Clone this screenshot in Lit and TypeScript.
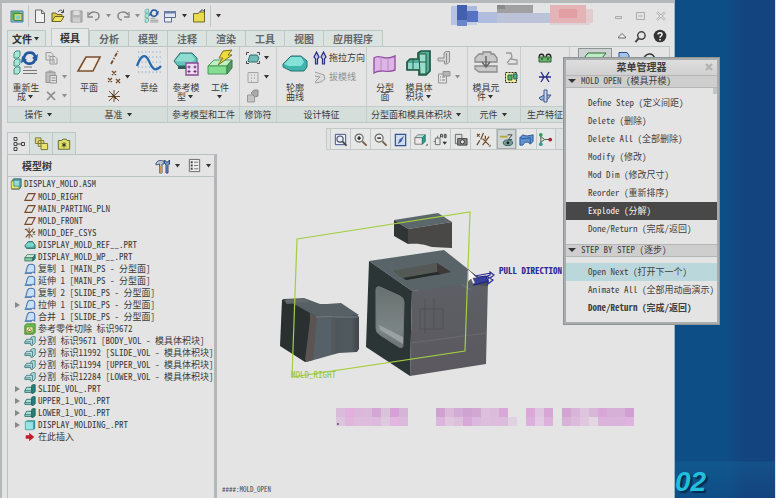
import { LitElement, html, svg, css, nothing } from "lit";
import { customElement, property } from "lit/decorators.js";
import { classMap } from "lit/directives/class-map.js";

type Drawing = { box: string; art: unknown };

const d = (box: string, art: unknown): Drawing => ({ box, art });

const block = (front: string, top: string, side: string) => svg`
  <path d="M1 8 4 4h10l-3 4z" fill=${top} stroke="#2b5a55" stroke-width=".8"/>
  <path d="M1 8h10v4H1z" fill=${front} stroke="#2b5a55" stroke-width=".8"/>
  <path d="m11 8 3-4v5l-3 3z" fill=${side} stroke="#2b5a55" stroke-width=".8"/>`;

const DRAWINGS: Record<string, Drawing> = {
  app: d("0 0 16 16", svg`<path d="M2 3h12v11H2z" fill="#8fb9d8" stroke="#4a7aa5"/><path d="M3 3.500h8V12H3z" fill="#5fae5a"/><path d="M5 5.500h8v7H5z" fill="#d8d36a" stroke="#3f8a4a"/><path d="M7 7.500h4v3.500H7z" fill="#7fd0c8"/>`),
  file: d("0 0 16 16", svg`<path d="M3.500 2h6l3 3v9.500h-9zM9.500 2v3.500h3" fill="#f1f1f1" stroke="#666"/>`),
  open: d("0 0 16 16", svg`<path d="M2 13.500V5h4l1 1.500h5V9" fill="#d9c84a" stroke="#6b6426"/><path d="m2 13.500 3-5h9l-3 5z" fill="#f0e25c" stroke="#6b6426"/><path d="M8 4c2-3 4-2 5 0M13.500 1.500V4.500H11" fill="none" stroke="#444"/>`),
  save: d("0 0 16 16", svg`<path d="M3 3h11v11H3z" fill="#b5b5b5" stroke="#999"/><path d="M5.500 3h6v4h-6z" fill="#dedede"/><path d="M5 9.500h7V14H5z" fill="#cdcdcd"/>`),
  undo: d("0 0 16 16", svg`<path d="M3 7c2-4 10-4 10 1 0 2-1.500 4-4 4" fill="none" stroke="#858585" stroke-width="1.500"/><path d="M2 4v5h5" fill="none" stroke="#858585" stroke-width="1.300"/>`),
  redo: d("0 0 16 16", svg`<path d="M13 7c-2-4-10-4-10 1 0 2 1.500 4 4 4" fill="none" stroke="#858585" stroke-width="1.500"/><path d="M14 4v5H9" fill="none" stroke="#858585" stroke-width="1.300"/>`),
  regen: d("0 0 28 28", svg`${[2, 10, 18].map((y) => svg`<path d="M2 ${y + 2}l2-2h4v5l-2 2H2z" fill="#a8e6da" stroke="#3f8f83"/>`)}<path d="M12 9c1-7 10-7 11-1M23 10c-1 6-9 6-11 1" fill="none" stroke="#2457a0" stroke-width="2.600"/><path d="m26 5-1 7-5-3zM9 14l1-7 5 4z" fill="#2457a0"/><path d="M12 18h8M11 21.500h14M11 24.500h14" stroke="#777" stroke-width="1.200"/>`),
  windows: d("0 0 16 16", svg`<path d="M2.500 3.500h11v6h-11z" fill="#dfe6f2" stroke="#5c6b8f"/><path d="M2 3h12v2.500H2z" fill="#6b7ca6"/><path d="M2.500 9.500h7V14h-7z" fill="#eee" stroke="#5c6b8f"/>`),
  folder: d("0 0 16 16", svg`<path d="M2.500 5.500h5l1-1.500h5v10h-11z" fill="#e8dc4e" stroke="#6f6a25"/><path d="M9 4c1-3 3-2 4-1M13.500 1v3" fill="none" stroke="#444"/>`),
  copy: d("0 0 16 16", svg`<path d="M3 2.500h5l2 2V10H3zM7 6.500h5l2 2V14H7z" fill="#e2e2e2" stroke="#999"/><path d="M9 10h3M9 12h3M5 6h2" stroke="#999"/>`),
  paste: d("0 0 16 16", svg`<path d="M3 3h9v10.500H3z" fill="#bdbdbd" stroke="#949494"/><path d="M5.500 1.500h4v2.500h-4z" fill="#a5a5a5"/><path d="M7 6.500h6.500V14H7z" fill="#e2e2e2" stroke="#949494"/><path d="M8.500 9h4M8.500 11.500h4" stroke="#949494"/>`),
  cross: d("0 0 16 16", svg`<path d="M4 4c3 2 5 5 8 8M12 4c-3 2-5 5-8 8" stroke="#8c8c8c" stroke-width="1.600" fill="none"/>`),
  plane: d("0 0 28 28", svg`<path d="M11 8h14l-7 14H3z" fill="#efebe4" stroke="#7b4f2c" stroke-width="1.600"/>`),
  axis: d("0 0 16 16", svg`<path d="m5 14 7-13" stroke="#744a28" stroke-width="1.700" stroke-dasharray="4 1.500 1.500 1.500"/>`),
  points: d("0 0 16 16", svg`<path d="m6 2 4 4m0-4L6 6M2 9l4 4m0-4-4 4M10 10l4 4m0-4-4 4" stroke="#744a28" stroke-width="1.300"/>`),
  csys: d("0 0 16 16", svg`<path d="M8 2v12M3 3l10 10M13 3 3 13M2 8.500h12" stroke="#744a28"/><path d="m6 6 4 5" stroke="#2f2a22" stroke-width="1.200"/>`),
  sketch: d("0 0 28 28", svg`${[3, 8, 13, 18, 23].map((y) => svg`<path d="M3 ${y}h23" stroke="#7aa6d3" stroke-width="1.200" stroke-dasharray="1.200 2.400"/>`)}<path d="M2 17c4-11 8-13 12-5 3 7 6 12 12 5" fill="none" stroke="#2767ae" stroke-width="2.200"/>`),
  refModel: d("0 0 28 28", svg`<path d="m2 12 6-8h12l5 5v5l-3 3H6z" fill="#66c3bb" stroke="#2c6f6b"/><path d="m3 12 6-7h10l4 5-3 3z" fill="#8fdcd3"/><path d="M6 17h8v3H6z" fill="#2c5e5c"/><path d="M14 14h12v12H14z" fill="#f0dcf2" stroke="#8b4a93" stroke-width="1.400"/><path d="M17 16.500v3m-1.500-1.500h3M23 16.500v3m-1.500-1.500h3M17 21v3m-1.500-1.500h3M23 21v3m-1.500-1.500h3" stroke="#6a2f78"/>`),
  workpiece: d("0 0 28 28", svg`<path d="m2 17 6-6h18l-5 6z" fill="#bff0c4" stroke="#4d9a5c"/><path d="M2 17h19v8H2z" fill="#85dc93" stroke="#4d9a5c"/><path d="m21 17 5-6v8l-5 6z" fill="#4f9f60" stroke="#397a48"/><path d="m17 2 9-1-4 5h4L12 16l5-7h-4z" fill="#eddc3c" stroke="#7e6f1d"/>`),
  shrink: d("0 0 16 16", svg`<path d="m3 11 2-6h7l2 3-2 4H4z" fill="#70bdb8" stroke="#2c6f6b"/><path d="M1.500 5V2.500H4M12 2.500h2.500V5M1.500 11v2.500H4M12 13.500h2.500V11" fill="none" stroke="#444"/>`),
  grayBox: d("0 0 16 16", svg`<path d="M3 3.500h10v10H3z" fill="#e2e2e2" stroke="#a5a5a5"/><path d="M6 6h1M9 6h1M6 9h1M9 9h1M6 12h1" stroke="#999"/>`),
  grayTool: d("0 0 16 16", svg`<path d="M2.500 7h7v7h-7z" fill="#c4c4c4" stroke="#999"/><path d="m6 5 3-3h4v6l-3 1z" fill="#aaa" stroke="#8b8b8b"/>`),
  silhouette: d("0 0 28 28", svg`<path d="m2 15 8-8h10l6 5v6l-3 4H10l-8-4z" fill="#3fb5ae" stroke="#2b6e6c"/><path d="m3 15 7-7h10l3 5-3 4H8z" fill="#84e2d9"/>`),
  pull: d("0 0 16 16", svg`<path d="m2 7 2.500-5L7 7 5.500 9v5h-2V9zM9 7l2.500-5L14 7l-1.500 2v5h-2V9z" fill="#bcc3e4" stroke="#2b2f86" stroke-width="1.200"/>`),
  draft: d("0 0 16 16", svg`<path d="m3 3 9 3 1 4-4 3-6 1M3 7l5 1-5 5" fill="#dcdcdc" stroke="#a0a0a0"/>`),
  parting: d("0 0 28 28", svg`<path d="M3 9c6-5 9 4 21-2v14c-8 4-14-2-21 3z" fill="#deb6e6" stroke="#9553a3" stroke-width="1.400"/><path d="M10 8v13M17 9v13" stroke="#bd86c8"/>`),
  volume: d("0 0 28 28", svg`<path d="m2 13 3-3h8V4l3-2h9v20l-4 4h-7v-5H2z" fill="#55aa99" stroke="#1e5a42" stroke-width="1.700"/><path d="M3 14h11v6H3z" fill="#8fd8cc"/><path d="M14 5h7v20h-6z" fill="#9bdccb" stroke="#1e5a42"/><path d="M8 10v10M14 13h7" stroke="#1e5a42"/>`),
  grayVolume: d("0 0 16 16", svg`<path d="M2 8h6V3l2-1.500h3.500V12L11 14H8.500v-3H2z" fill="#d5d5d5" stroke="#8d8d8d"/><path d="M10.500 3v10" stroke="#8d8d8d"/>`),
  grayForm: d("0 0 16 16", svg`<path d="M2.500 5h8v9h-8z" fill="#e4e4e4" stroke="#929292"/><path d="M7 2.500h7V7H7z" fill="#b5b5b5" stroke="#929292"/><path d="M4 8h1m1 0h3M4 11h1m1 0h3" stroke="#808080"/>`),
  component: d("0 0 28 28", svg`<path d="m3 9 4-4h4V3h8v2h3l3 4v4H3zM3 17h22v6H7l-4-3z" fill="#c9c9c9" stroke="#8b8b8b" stroke-width="1.300"/><path d="M14 7v10m-4-4 4 5 4-5" fill="none" stroke="#666" stroke-width="1.500"/>`),
  grayPart: d("0 0 16 16", svg`<path d="M3 3h5l1 4-5 6M8 9l6 1v4H5" fill="none" stroke="#999" stroke-width="1.300"/>`),
  pattern: d("0 0 16 16", svg`<path d="M2.500 3.500h11v10h-11z" fill="#f2ee9a" stroke="#222" stroke-dasharray="2 1"/><path d="M5 6h4v5H5z" fill="#57b46c" stroke="#22604a"/><path d="M10 5h4v5h-3z" fill="#4aaea5" stroke="#22604a"/>`),
  runner: d("0 0 16 16", svg`<path d="M2 8c0-5 5-5 5 0M9 8c0-5 5-5 5 0" fill="none" stroke="#222" stroke-width="1.300"/><path d="M2 7h12v5H2z" fill="#67b46a" stroke="#2d6430"/><path d="M4 9h2m4 0h2" stroke="#222"/>`),
  water: d("0 0 16 16", svg`<path d="M2 8h12M4 3l3 5-3 5M12 3 9 8l3 5" fill="none" stroke="#262a86" stroke-width="1.300"/>`),
  ejector: d("0 0 16 16", svg`<path d="m2 10 5-3h7l-4 5H4z" fill="#9fb6da" stroke="#3d5a8c"/><path d="M7 2h3v12H7z" fill="#c9d6ec" stroke="#3d5a8c"/>`),
  greenBlock: d("0 0 28 28", svg`<path d="m3 9 4-5h18l-4 5z" fill="#bcecc1" stroke="#2d6b3a"/><path d="M3 9h18v12H3z" fill="#7fd28c" stroke="#2d6b3a"/>`),
  blueDoc: d("0 0 16 16", svg`<path d="M3 2.500h8l2 3V14H3z" fill="#a4c4ea" stroke="#27508f"/>`),
  gauge: d("0 0 28 28", svg`<path d="M4 12c2-9 10-9 12-2h9" fill="none" stroke="#333" stroke-width="1.600"/><circle cx="10" cy="12" r="3" fill="#888"/>`),
  tabTree: d("0 0 16 16", svg`<path d="M3 1.500h3v3H3zM3 6.500h3v3H3zM3 11.500h3v3H3zM10.500 6.500h3v3h-3zM6 8h4.500" fill="none" stroke="#444"/>`),
  tabFolders: d("0 0 16 16", svg`<path d="M1.500 2h6v6h-6zM4.500 5h6v6h-6z" fill="#e3dc7a" stroke="#77722d"/><path d="M7.500 8h7v6.500h-7z" fill="#ece36d" stroke="#77722d"/>`),
  tabFav: d("0 0 16 16", svg`<path d="M1.500 4h4l1-1.500h4l1 1.500h3v10h-13z" fill="#dfe068" stroke="#5b5c26"/><path d="M8 6v6M5.500 7.500l5 3M10.500 7.500l-5 3" stroke="#222"/>`),
  tools: d("0 0 16 16", svg`<path d="M1 5c3-4 5-2 8-2v3H7v9H4.500V6L1 7z" fill="#b9c4d4" stroke="#4c5f7d"/><path d="M4.500 8H7v7H4.500z" fill="#d0964a"/><path d="M11 15V7L9.500 5V2l2 2h1l2-2v4L13 7.500V15z" fill="#6f92c2" stroke="#2f4b79"/>`),
  listDoc: d("0 0 16 16", svg`<path d="M2.500 1.500h11v13h-11z" fill="#ededed" stroke="#666"/><path d="M4 4.500h2M4 8h2M4 11.500h2" stroke="#444" stroke-width="2"/><path d="M7.500 4.500H12M7.500 8H12M7.500 11.500H12" stroke="#777"/>`),
  asm: d("0 0 14 14", svg`<path d="m2 4 2-3h9v9l-2 3H2z" fill="#4c9aa0" stroke="#3d6b6f"/><path d="M1.500 3.500h9v9h-9z" fill="#ece56e" stroke="#8f8a35"/><path d="M4.500 2.500h7v7h-7z" fill="#94dcd8" stroke="#3d8f8a"/>`),
  datum: d("0 0 14 14", svg`<path d="M5 3h8l-4 8H1z" fill="none" stroke="#744a28" stroke-width="1.300"/>`),
  treeCsys: d("0 0 14 14", svg`<path d="M6 1v12M2 2l8 10M11 2 2 12M10 5l3 4m0-4-3 4M1 3h3" stroke="#744a28" stroke-width="1.200"/>`),
  refPart: d("0 0 14 14", svg`<path d="m1 8 4-5h5l3 4v4H3z" fill="#4aa8a0" stroke="#256863"/><path d="m2 7 3-3h5l2 3-2 2H3z" fill="#7dd6ce"/>`),
  wpPart: d("0 0 15 14", block("#7fcf9f", "#c5f0d2", "#2f7d63")),
  quilt: d("0 0 14 14", svg`<path d="M1.500 12c2-2 1-8 4-10 3-1 7 0 7 2v8c-1-2-3-2-4 0z" fill="#c8e0f4" stroke="#4472ad" stroke-width="1.200"/><path d="M2 11.500h7" stroke="#4472ad"/>`),
  cut: d("0 0 14 14", svg`<path d="M1 3l2-2h10v10l-2 2H1z" fill="#6ec14c" stroke="#3b7d2a"/><path d="M2.500 4.500h8v7h-8z" fill="#f0f2b8" stroke="#4e8b2f"/><path d="M4.500 10V8l2-2 2 2v2z" fill="none" stroke="#8b5a2b"/>`),
  split: d("0 0 14 14", svg`<path d="m1 8 2-3h5V3l2-1h3v7l-3 3H8v-2H1z" fill="#b5dfe0" stroke="#3f787c"/><path d="M8 5h2v6M1 8h7" fill="none" stroke="#3f787c"/>`),
  volPart: d("0 0 14 14", svg`<path d="m1 9 2-4h6v6H1z" fill="#a6e0d5" stroke="#2d6b66"/><path d="M1 9h7" stroke="#2d6b66"/><path d="m9 3 1-1h3v8l-2 2H9z" fill="#2b8078" stroke="#1c5852"/>`),
  molding: d("0 0 14 14", svg`<path d="m2 3 1.500-1.500H13V11l-1.500 1.500z" fill="#35918d"/><path d="M1.500 3h9.500v9.500H1.500z" fill="#97e3e3" stroke="#4aa5a5"/>`),
  insert: d("0 0 14 14", svg`<path d="M2 5h4V2l6 5-6 5V9H2z" fill="#bf1f2c"/>`),
  zoomFit: d("0 0 16 16", svg`<path d="M2.500 2.500h11v11h-11z" fill="#e8eef8" stroke="#3f4f8c"/><circle cx="7.500" cy="7.500" r="3.300" fill="none" stroke="#4a4f63" stroke-width="1.200"/><path d="m10 10 4.500 4.500" stroke="#444" stroke-width="1.800"/>`),
  zoomIn: d("0 0 16 16", svg`<circle cx="6.500" cy="6.500" r="4.300" fill="#eee" stroke="#666" stroke-width="1.200"/><path d="M4.500 6.500h4m-2-2v4" stroke="#222" stroke-width="1.500"/><path d="m10 10 4.500 4.500" stroke="#7a5c3c" stroke-width="2"/>`),
  zoomOut: d("0 0 16 16", svg`<circle cx="6.500" cy="6.500" r="4.300" fill="#eee" stroke="#666" stroke-width="1.200"/><path d="M4.500 6.500h4" stroke="#222" stroke-width="1.500"/><path d="m10 10 4.500 4.500" stroke="#7a5c3c" stroke-width="2"/>`),
  repaint: d("0 0 16 16", svg`<path d="M2.500 2.500h11v12h-11z" fill="#cfdcf3" stroke="#34528f" stroke-width="1.300"/><path d="m5 13 2-5 5-4-3 6z" fill="#3c5fa6"/>`),
  shade: d("0 0 16 16", svg`<path d="m2 6 3-3h8l-3 3z" fill="#bdeee5" stroke="#777"/><path d="M2 6h8v7H2z" fill="#e9e9e9" stroke="#777"/><path d="m10 6 3-3v7l-3 3z" fill="#319c90" stroke="#24776d"/><path d="M13.500 14.500h2v-2z" fill="#222"/>`),
  views: d("0 0 16 16", svg`<path d="M2.500 6.500h5v7h-5zM5 6.500V4M2 10H.500" fill="none" stroke="#666"/><path d="M8 6V2.500h2V6M8 4.500h2M12 2.500h2V6h-2zM12 4.200h2" fill="none" stroke="#444"/><path d="M10 10.500h5l-2.500 3z" fill="#333"/>`),
  camera: d("0 0 16 16", svg`<path d="M2.500 2.500h7v10h-7z" fill="#ddd" stroke="#666"/><path d="M5 7h10v7H5z" fill="#888" stroke="#444"/><circle cx="10" cy="10.500" r="2.200" fill="#e4e4e4" stroke="#333"/>`),
  datums: d("0 0 16 16", svg`<path d="m1 2 3 3m0-3L1 5M8 1 5 8M4 9l-3 5M7 7l7 7M14 5l-7 9M10 4v4" stroke="#744a28" stroke-width="1.300"/><path d="M13.500 15.500h2v-2z" fill="#222"/>`),
  annot: d("0 0 16 16", svg`<path d="M1 5h8" stroke="#b6aa36" stroke-width="2"/><path d="M9 3h5l-4 5h4" fill="none" stroke="#444"/><ellipse cx="9.500" cy="11.500" rx="5" ry="3" fill="#6f9c98" stroke="#375f5c"/><circle cx="9.500" cy="11.500" r="1.500" fill="#222"/>`),
  surface: d("0 0 16 16", svg`<path d="m1 6 3-3c3 2 7 1 11 0v7l-3 3c-2-3-6-3-8 1H1z" fill="#5d93d3" stroke="#2b5590"/><path d="M1 6c4 2 7 1 11 0v6" fill="none" stroke="#2b5590"/>`),
  nodes: d("0 0 16 16", svg`<path d="M3 3v10M3 5l4 3h5M3 11l4-3" fill="none" stroke="#3d5c4a"/><circle cx="3" cy="3" r="2" fill="#3a9a5a"/><circle cx="3" cy="13" r="2" fill="#3a9a96"/><circle cx="13" cy="8" r="2" fill="#a82330"/>`),
  minimize: d("0 0 12 12", svg`<path d="M2.500 6.500h6v2h-6z" fill="none" stroke="#aaa"/>`),
  restore: d("0 0 12 12", svg`<path d="M2.500 2.500h8v7h-8zM4.500 6h4" fill="none" stroke="#aaa"/>`),
  close: d("0 0 12 12", svg`<path d="m2 2 8 8m0-8-8 8" stroke="#b2b2b2" stroke-width="2.400"/><path d="m2 2 8 8m0-8-8 8" stroke="#e4e4e4"/>`),
  dialogClose: d("0 0 12 12", svg`<path d="m3 3 6 6m0-6-6 6" stroke="#b0b0b0" stroke-width="2"/>`),
  up: d("0 0 12 12", svg`<path d="m2.500 7 3.500-3.500L9.500 7v1h-7z" fill="#eee" stroke="#666"/>`),
  search: d("0 0 14 14", svg`<circle cx="8" cy="6" r="4" fill="none" stroke="#444" stroke-width="1.600"/><path d="m5 9-3.500 4" stroke="#444" stroke-width="2.200"/>`),
  help: d("0 0 14 14", svg`<circle cx="7" cy="7" r="6.300" fill="#333"/><path d="M5 5.500C5 3 9.200 3.200 9 5.500 8.900 7 7 7 7 8.700M7 10v1.500" fill="none" stroke="#fff" stroke-width="1.500"/>`),
};

const icon = (name: string, size: number) => {
  const { box, art } = DRAWINGS[name];
  return html`<svg class="icon" width=${size} height=${size} viewBox=${box} aria-hidden="true">${art}</svg>`;
};

const caret = (dim = false) => html`<svg class="caret" width="9" height="5" viewBox="0 0 9 5" aria-hidden="true"><path d="M2 1h5L4.500 4.500z" fill=${dim ? "#8e8e8e" : "#333"}/></svg>`;

const shared = css`
  * { box-sizing: border-box; }
  button {
    font: inherit; color: inherit; background: none; border: 0; margin: 0; padding: 0;
    display: flex; align-items: center; white-space: nowrap;
  }
  svg { display: block; flex: none; }
`;

type Big = { kind: "big"; icon: string; lines: string[]; drop?: boolean; active?: boolean; label?: string };
type Small = { icon: string; text?: string; drop?: boolean; dim?: boolean; label: string };
type Col = { kind: "col"; items: Small[] };
type Group = { title: string; drop?: boolean; cls: string; parts: (Big | Col)[] };

const GROUPS: Group[] = [
  { title: "操作", drop: true, cls: "snug", parts: [
    { kind: "big", icon: "regen", lines: ["重新生", "成"], drop: true },
    { kind: "col", items: [{ icon: "copy", label: "复制" }, { icon: "paste", label: "粘贴", drop: true, dim: true }, { icon: "cross", label: "删除", drop: true, dim: true }] } ] },
  { title: "基准", drop: true, cls: "snug", parts: [
    { kind: "big", icon: "plane", lines: ["平面"] },
    { kind: "col", items: [{ icon: "axis", label: "轴" }, { icon: "points", label: "点", drop: true }, { icon: "csys", label: "坐标系" }] },
    { kind: "big", icon: "sketch", lines: ["草绘"] } ] },
  { title: "参考模型和工件", cls: "snug", parts: [
    { kind: "big", icon: "refModel", lines: ["参考模", "型"], drop: true },
    { kind: "big", icon: "workpiece", lines: ["工件", ""], drop: true } ] },
  { title: "修饰符", cls: "roomy", parts: [
    { kind: "col", items: [{ icon: "shrink", label: "收缩", drop: true }, { icon: "grayBox", label: "分类", drop: true }, { icon: "grayTool", label: "修饰" }] } ] },
  { title: "设计特征", cls: "snug", parts: [
    { kind: "big", icon: "silhouette", lines: ["轮廓", "曲线"] },
    { kind: "col", items: [{ icon: "pull", text: "拖拉方向", label: "拖拉方向" }, { icon: "draft", text: "拔模线", dim: true, label: "拔模线" }] } ] },
  { title: "分型面和模具体积块", drop: true, cls: "snug", parts: [
    { kind: "big", icon: "parting", lines: ["分型", "面"] },
    { kind: "big", icon: "volume", lines: ["模具体", "积块"], drop: true },
    { kind: "col", items: [{ icon: "grayVolume", label: "体积块分割" }, { icon: "grayForm", label: "实体分割", drop: true, dim: true }] } ] },
  { title: "元件", drop: true, cls: "snug", parts: [
    { kind: "big", icon: "component", lines: ["模具元", "件"], drop: true },
    { kind: "col", items: [{ icon: "grayPart", label: "铸模" }, { icon: "pattern", label: "模具布局" }] } ] },
  { title: "生产特征", cls: "center", parts: [
    { kind: "col", items: [{ icon: "runner", label: "流道" }, { icon: "water", label: "等高线" }, { icon: "ejector", label: "顶杆孔" }] } ] },
  { title: "", cls: "last", parts: [
    { kind: "big", icon: "greenBlock", lines: [], active: true, label: "模具开模" },
    { kind: "col", items: [{ icon: "blueDoc", label: "拔模" }] },
    { kind: "big", icon: "gauge", lines: [], label: "厚度" } ] },
];

@customElement("mold-ribbon")
export class MoldRibbon extends LitElement {
  static styles = [shared, css`
    :host { display: block; font-size: 9px; line-height: 9px; color: #3c3c3c; }
    .tabs { display: flex; align-items: flex-end; height: 18px; font-size: 10px; font-weight: 700; color: #626666; }
    .file, .tab { height: 16px; background: #dbe3e1; border: 1px solid #bcc8c6; border-bottom: 0; }
    .file { padding: 0 4px; margin-right: 5px; color: #2e2e2e; }
    .tab { padding: 0 9px; border-width: 1px 0 0 1px; }
    .tab:last-child { border-right-width: 1px; }
    .tab.on { height: 18px; background: #e6e7e7; border-right-width: 1px; padding: 0 8px; color: #333; }
    .groups { display: flex; border: 1px solid #bcc8c6; overflow: hidden; }
    .group { display: flex; flex-direction: column; border-right: 1px solid #c6cccb; flex: none; }
    .group.last { flex: 1 1 0; border-right: 0; }
    .body { display: flex; height: 59px; align-items: flex-start; padding: 1px 1px 0; }
    .roomy .body { padding-left: 5px; padding-right: 5px; }
    .center .body { justify-content: center; }
    .last .body { gap: 4px; padding-left: 8px; }
    .title { display: flex; align-items: center; justify-content: center; height: 16px; gap: 2px; padding: 0 4px; background: #d6dedc; border-top: 1px solid #c3cccb; white-space: nowrap; }
    .center .title { padding: 0 6px; }
    .roomy .title { padding: 0; }
    .big { flex-direction: column; min-width: 34px; height: 55px; padding: 1px 2px 0; }
    .big.active { background: #cfd2d2; box-shadow: inset 0 0 0 1px #8d9292; }
    .big .lines { margin-top: 6px; display: flex; flex-direction: column; align-items: center; }
    .line { display: flex; align-items: center; justify-content: center; min-height: 9px; }
    .col { display: flex; flex-direction: column; }
    .small { height: 19px; gap: 1px; }
    .dim { color: #8f9191; }
  `];

  private big(b: Big) {
    return html`<button class=${classMap({ big: true, active: !!b.active })} aria-label=${b.label ?? b.lines.join("")}>
      ${icon(b.icon, 28)}
      <span class="lines">${b.lines.map((t, i) => html`<span class="line">${t}${b.drop && i === b.lines.length - 1 ? caret() : nothing}</span>`)}</span>
    </button>`;
  }

  private small(s: Small) {
    return html`<button class=${classMap({ small: true, dim: !!s.dim })} aria-label=${s.label}>
      ${icon(s.icon, 16)}${s.text ?? nothing}${s.drop ? caret(s.dim) : nothing}
    </button>`;
  }

  render() {
    return html`
      <nav class="tabs" role="tablist" aria-label="功能区">
        <button class="file">文件${caret()}</button>
        ${["模具", "分析", "模型", "注释", "渲染", "工具", "视图", "应用程序"].map((t, i) => html`
          <button role="tab" aria-selected=${i === 0 ? "true" : "false"} class=${classMap({ tab: true, on: i === 0 })}>${t}</button>`)}
      </nav>
      <div class="groups">
        ${GROUPS.map((g) => html`<section class="group ${g.cls}">
          <div class="body">${g.parts.map((p) => p.kind === "big" ? this.big(p) : html`<div class="col">${p.items.map((s) => this.small(s))}</div>`)}</div>
          <div class="title">${g.title}${g.drop ? caret() : nothing}</div>
        </section>`)}
      </div>`;
  }
}

type TreeNode = { icon: string; text: string; fold?: boolean };
const NODES: TreeNode[] = [
  { icon: "datum", text: "MOLD_RIGHT" },
  { icon: "datum", text: "MAIN_PARTING_PLN" },
  { icon: "datum", text: "MOLD_FRONT" },
  { icon: "treeCsys", text: "MOLD_DEF_CSYS" },
  { icon: "refPart", text: "DISPLAY_MOLD_REF__.PRT" },
  { icon: "wpPart", text: "DISPLAY_MOLD_WP__.PRT" },
  { icon: "quilt", text: "复制 1 [MAIN_PS - 分型面]" },
  { icon: "quilt", text: "延伸 1 [MAIN_PS - 分型面]" },
  { icon: "quilt", text: "复制 2 [SLIDE_PS - 分型面]" },
  { icon: "quilt", text: "拉伸 1 [SLIDE_PS - 分型面]", fold: true },
  { icon: "quilt", text: "合并 1 [SLIDE_PS - 分型面]" },
  { icon: "cut", text: "参考零件切除 标识9672" },
  { icon: "split", text: "分割 标识9671 [BODY_VOL - 模具体积块]" },
  { icon: "split", text: "分割 标识11992 [SLIDE_VOL - 模具体积块]" },
  { icon: "split", text: "分割 标识11994 [UPPER_VOL - 模具体积块]" },
  { icon: "split", text: "分割 标识12284 [LOWER_VOL - 模具体积块]" },
  { icon: "volPart", text: "SLIDE_VOL_.PRT", fold: true },
  { icon: "volPart", text: "UPPER_1_VOL_.PRT", fold: true },
  { icon: "volPart", text: "LOWER_1_VOL_.PRT", fold: true },
  { icon: "molding", text: "DISPLAY_MOLDING_.PRT", fold: true },
  { icon: "insert", text: "在此插入" },
];

@customElement("model-tree")
export class ModelTree extends LitElement {
  static styles = [shared, css`
    :host { display: flex; flex-direction: column; font-size: 9px; color: #3a3a3a; }
    .tabs { display: flex; height: 22px; }
    .tab { width: 23px; justify-content: center; background: #d9e1df; border: 1px solid #bcc8c6; border-width: 1px 1px 0 0; }
    .tab.on { background: #e4e4e4; border-left-width: 1px; }
    .panel { flex: 1; border: 1px solid #b9c2c2; border-right: 3px solid #b3b7b7; border-bottom: 0; min-height: 0; overflow: hidden; }
    .head { display: flex; align-items: center; height: 22px; padding: 0 1px 0 14px; border-bottom: 1px solid #bcc4c4; }
    h2 { margin: 0; flex: 1; font-size: 10px; font-weight: 700; }
    .tool { gap: 2px; margin-left: 5px; }
    ul { list-style: none; margin: 0; padding: 0 0 0 2px; font-feature-settings: "hwid"; }
    ul ul { padding-left: 3px; }
    .row { display: flex; align-items: center; height: 12px; gap: 2px; line-height: 12px; white-space: pre; }
    .root { height: 14px; }
    .fold { width: 9px; }
  `];

  render() {
    return html`
      <div class="tabs" role="tablist" aria-label="导航器">
        <button class="tab on" role="tab" aria-label="模型树">${icon("tabTree", 16)}</button>
        <button class="tab" role="tab" aria-label="文件夹浏览器">${icon("tabFolders", 15)}</button>
        <button class="tab" role="tab" aria-label="收藏夹">${icon("tabFav", 14)}</button>
      </div>
      <div class="panel">
        <div class="head"><h2>模型树</h2>
          <button class="tool" aria-label="设置">${icon("tools", 16)}${caret()}</button>
          <button class="tool" aria-label="显示">${icon("listDoc", 15)}${caret()}</button>
        </div>
        <ul role="tree">
          <li role="treeitem"><div class="row root">${icon("asm", 12)}<span>DISPLAY_MOLD.ASM</span></div>
            <ul role="group">${NODES.map((n) => html`<li class="row" role="treeitem">
              <svg class="fold" width="9" height="8" viewBox="0 0 9 8" aria-hidden="true">${n.fold ? svg`<path d="M2 1v6l5-3z" fill="#858888"/>` : nothing}</svg>${icon(n.icon, 12)}<span>${n.text}</span></li>`)}
            </ul>
          </li>
        </ul>
      </div>`;
  }
}

const VIEW_TOOLS: [string, string][] = [
  ["zoomFit", "重新调整"], ["zoomIn", "放大"], ["zoomOut", "缩小"], ["repaint", "重画"], ["shade", "显示样式"], ["views", "已命名视图"],
  ["camera", "视图管理器"], ["datums", "基准显示"], ["annot", "注释显示"], ["surface", "曲面"], ["nodes", "旋转中心"],
];

type Tile = { x: number; y: number; fill: string };
const tiles = (left: number, rows: string[]): Tile[] =>
  rows.flatMap((row, r) => row.split(" ").map((c, i) => ({ x: left + i * 9, y: 409 + r * 9, fill: c === "-" ? "none" : `#${c}` })));

const MOSAIC = [
  ...tiles(336, [
    "d9bcd9 e3b0dd dbb8da dab9da d3a6d3 d9c3d9 d99fd8 d5b5d6",
    "dcc6dc e0b6dd dfbcdc dfbcde dcbadb dec9de e3b5e0 dbb9dc",
  ]),
  ...tiles(436, [
    "cfa2d1 d9bad9 d2acd4 cfa3d1 d0a8d2 dcc0dc dbbcdb d8a8d8 - - dba8da dfc5df d6a6d7 - d2a3d3 d9b4d9 dec4df d9b7d9 d8a7d8 d6b0d7 d7b0d8 cfa0d1",
    "dbb5dc dfc8df dcc0dc d7a9d8 dbb9dc dcbfdc dcbddc dcbcdc e0d2e0 - dcb0dc e1cbe1 dcb2dc - d8b1d9 dbbadb dfc7df e2d6e2 dbb3db d9b4da dab4db ddb4dd",
  ]),
];

@customElement("mold-canvas")
export class MoldCanvas extends LitElement {
  static styles = [shared, css`
    :host { display: flex; flex-direction: column; min-width: 0; overflow: hidden; }
    .tools { align-self: center; display: flex; height: 22px; padding: 0 9px 0 3px; border: 1px solid #c2c9c8; background: #dfe2e2; flex: none; }
    .tool { width: 20px; justify-content: center; border-left: 1px solid #c2c9c8; background: #e6e7e7; }
    .tool.wide { width: 26px; }
    .tool:last-child { border-right: 1px solid #c2c9c8; }
    .tool.on { background: #d0d5d5; box-shadow: inset 0 0 0 1px #a5aaaa; }
    .scene { font-feature-settings: "hwid"; }
    .pull { font-size: 9px; font-weight: 700; fill: #2a2a94; }
    .name { font-size: 9px; fill: #93c63c; }
    .status { font-size: 7px; fill: #444; }
  `];

  render() {
    return html`
      <div class="tools" role="toolbar" aria-label="图形工具栏">
        ${VIEW_TOOLS.map(([n, label]) => html`<button class=${classMap({ tool: true, on: n === "annot", wide: n === "datums" })} aria-label=${label}>${icon(n, 15)}</button>`)}
      </div>
      <svg class="scene" width="457" height="347" viewBox="217 151 457 347" role="img" aria-label="模具分解视图">
        <defs>
          <linearGradient id="front" x1="0" y1="0" x2="0" y2="1"><stop offset="0" stop-color="#5d6066"/><stop offset="1" stop-color="#5b585f"/></linearGradient>
          <linearGradient id="inner" x1="0" y1="0" x2="0" y2="1"><stop offset="0" stop-color="#68706f"/><stop offset=".7" stop-color="#7c8586"/><stop offset="1" stop-color="#6b7375"/></linearGradient>
          <linearGradient id="round" x1="0" y1="0" x2="1" y2="0"><stop offset="0" stop-color="#566066"/><stop offset=".45" stop-color="#566067"/><stop offset=".5" stop-color="#4f575d"/><stop offset=".85" stop-color="#50595e"/><stop offset="1" stop-color="#3f4448"/></linearGradient>
        </defs>
        <path d="m394 221 44-7 14 9-44 7z" fill="#5c676c"/>
        <path d="m394 221 14 9v15l-14-8z" fill="#2f3434"/>
        <path d="m408 230 44-7v26l-20-1c-6-1-8-4-24-3z" fill="#494847"/>
        <path d="m369 262 75-11 44 35-76 6z" fill="#596469"/>
        <path d="m369 262 43 30-2 85-44-29z" fill="#2c3535"/>
        <path d="m412 292 76-10-2 83-76 12z" fill="url(#front)"/>
        <path d="m393 272 44-8 14 9-45 8z" fill="#4e5150"/>
        <path d="m393 272 44-8v9l-34 6z" fill="#555956"/><path d="m437 264 14 9-14 3z" fill="#3e3938"/>
        <path d="m403 279 34-6 4 2-35 6z" fill="#242b29"/>
        <path d="M376 291q0-4 4-3l20 9q4 2 4 6l-1 43q0 4-4 2l-19-12q-5-3-4-8z" fill="url(#inner)" stroke="#747778"/>
        <path d="m379 326 24 12v7l-23-14z" fill="#9aa1a1"/>
        <path d="m411 344 75-10" stroke="#6b6870"/>
        <path d="M420 310h23v20h-23zM425 300v34M434 299v30" fill="none" stroke="#4d4b55" stroke-width=".7"/>
        <path d="m461 285 10 6" stroke="#777"/>
        <path d="M282 301l2-1 20-1 16 6h7l14-1 18 12-13 4-36-2z" fill="#566065"/>
        <path d="m282 301 3-1 25 14q2 2 2 6l-4 42-3 1-25-16z" fill="#29302f"/>
        <path d="M311 319l3-3 25 1 18-1 2 2v32l-2 3-18 1q-8 2-18 5l-11 3-3-2z" fill="url(#round)"/>
        <path d="M310 314q5 1 7 4l-4 43-6 2-2-2 5-40z" fill="#5b5453"/>
        <path d="M316 318q14-1 22 0h20" fill="none" stroke="#727c81"/>
        <path d="M334 320v35" stroke="#5f5659" stroke-width="1.500"/>
        <path d="m284 301 20-1 6 3-23 2z" fill="#65686a"/>
        <path d="m297 240 173-27-5 139-173 26z" fill="none" stroke="#a3cf3f" stroke-width="1.200"/>
        <path d="m467 270 14 10 7 3v4l-14-1z" fill="#454c58"/>
        <path d="m475 277 16-3m-18 12 16-4m-15 0 16-6v-3l4 3-4 3M488 281v-3l5 3-5 4z" fill="none" stroke="#2a2a94" stroke-width="1.200"/>
        <path d="m472 279 14-2 2 5-14 4z" fill="#39409c" stroke="#1f2380"/>
        <path d="M468 270v13l3-3 2 5 2-1-2-5h4z" fill="#f6f6f6" stroke="#555" stroke-width=".5"/>
        <text class="pull" x="499" y="275">PULL DIRECTION</text>
        <text class="name" x="291" y="379">MOLD_RIGHT</text>
        ${MOSAIC.map((t) => svg`<rect x=${t.x} y=${t.y} width="9" height="9" fill=${t.fill}/>`)}
        <path d="M337 425h2" stroke="#222"/>
        <text class="status" x="222" y="493">####:MOLD_OPEN</text>
      </svg>`;
  }
}

@customElement("menu-manager")
export class MenuManager extends LitElement {
  static styles = [shared, css`
    :host { display: block; border: 1px solid #8f9494; background: #a9adad; padding: 2px; font-size: 9px; color: #3f3f3f; }
    .frame { background: #e4e4e4; padding-bottom: 5px; }
    header { display: flex; align-items: center; height: 15px; padding: 0 2px 2px 14px; background: linear-gradient(#dedede, #d0d0d0); }
    h2 { flex: 1; margin: 0; text-align: center; font-size: 10px; line-height: 13px; font-weight: 700; }
    h3 { display: flex; align-items: center; gap: 4px; margin: 0; height: 13px; padding: 0 0 1px 1px; font-size: 9px; line-height: 10px; font-weight: 400; background: #cecece; border: 1px solid #b5b5b5; border-width: 1px 0; font-feature-settings: "hwid"; }
    .list { padding: 6px 0; font-feature-settings: "hwid"; position: relative; }
    .list:last-child { padding-bottom: 0; }
    .list:first-of-type::after { content: ""; position: absolute; top: 0; right: 0; width: 4px; height: 6px; background: #c2c4c4; }
    .item { width: 100%; height: 18px; padding: 0 0 2px 22px; overflow: hidden; }
    .dark { background: #484848; color: #f0f0f0; }
    .hot { background: #bad7dc; }
    .bold { font-weight: 700; }
  `];
  @property({ attribute: false }) sections: { title: string; items: [string, string?][] }[] = [
    { title: "MOLD OPEN (模具开模)", items: [["Define Step (定义间距)"], ["Delete (删除)"], ["Delete All (全部删除)"], ["Modify (修改)"], ["Mod Dim (修改尺寸)"], ["Reorder (重新排序)"], ["Explode (分解)", "dark"], ["Done/Return (完成/返回)"]] },
    { title: "STEP BY STEP (逐步)", items: [["Open Next (打开下一个)", "hot"], ["Animate All (全部用动画演示)"], ["Done/Return (完成/返回)", "bold"]] },
  ];

  render() {
    return html`<div class="frame">
      <header><h2>菜单管理器</h2><button aria-label="关闭">${icon("dialogClose", 12)}</button></header>
      ${this.sections.map((s) => html`
        <h3><svg width="10" height="6" viewBox="0 0 10 6" aria-hidden="true"><path d="M1 1h8L5 5z" fill="#333"/></svg>${s.title}</h3>
        <div class="list" role="menu">${s.items.map(([t, c]) => html`<button class="item ${c ?? ""}" role="menuitem">${t}</button>`)}</div>`)}
    </div>`;
  }
}

@customElement("app-root")
export class AppRoot extends LitElement {
  static styles = [shared, css`
    :host {
      display: flex; position: relative; min-height: 100vh; overflow: hidden; background: #e4e4e4; color: #3c3c3c;
      font-family: "Noto Sans CJK SC", "Liberation Sans", sans-serif;
    }
    .window { flex: 1; min-width: 0; display: flex; flex-direction: column; border-top: 3px solid #b4b8b8; border-left: 2px solid #b4b8b8; border-right: 1px solid #9db4c2; }
    .bar { display: flex; align-items: center; height: 25px; padding: 0 7px; gap: 2px; }
    .sep { width: 1px; height: 22px; margin: 0 1px; background: #bfc8c6; }
    .space { flex: 1; }
    .controls { display: flex; gap: 9px; margin-left: 18px; }
    .top { position: relative; padding: 0 4px 0 5px; }
    .extras { position: absolute; right: 7px; top: 0; display: flex; align-items: center; gap: 6px; height: 16px; }
    .work { flex: 1; display: flex; min-height: 0; padding: 5px 0 0 5px; }
    model-tree { width: 210px; flex: none; padding-top: 4px; }
    mold-canvas { flex: 1; }
    .desktop { width: 101px; flex: none; display: flex; align-items: flex-end; border-right: 1px solid #dfe3e6; background: linear-gradient(transparent 461px, rgba(20, 110, 160, .3) 462px, transparent), linear-gradient(90deg, #0e4e86 0 50%, #14447f 70%); }
    .number { font: italic 700 28px/32px "Liberation Sans", Arial, sans-serif; color: #22bfdc; text-shadow: 2px 2px 1px #062a52; }
    menu-manager { position: absolute; top: 57px; right: 56px; width: 157px; }
  `];

  private tool(name: string, label: string, size = 16) {
    return html`<button aria-label=${label}>${icon(name, size)}</button>`;
  }

  render() {
    return html`
      <main class="window">
        <div class="bar">
          ${this.tool("app", "应用")}<span class="sep"></span>
          ${this.tool("file", "新建")}${this.tool("open", "打开")}${this.tool("save", "保存")}${this.tool("undo", "撤消")}${caret(true)}
          ${this.tool("redo", "重做")}${caret(true)}${this.tool("regen", "重新生成")}${this.tool("windows", "窗口")}${caret()}
          ${this.tool("folder", "关闭窗口")}<span class="sep"></span><button aria-label="自定义">${caret()}</button>
          <span class="space"></span>
          <svg width="142" height="22" viewBox="0 0 142 22" aria-hidden="true">
            <path d="M0 1h6v19H0z" fill="#b7c4e4"/><path d="M6 0h10v21H6z" fill="#4260ae"/><path d="M16 1h10v5H16z" fill="#a9b9df"/><path d="M16 6h11v11H16z" fill="#5672c0"/>
            <path d="M6 15h10v6H6z" fill="#6b86cb"/><path d="M16 17h10v3H16z" fill="#c4cde4"/><path d="M27 7h19v11H27z" fill="#b0bddf"/><path d="M46 8h53v10H46z" fill="#bcc3d8"/>
            <path d="M46 0h36v8H46z" fill="#a09fa1"/><path d="M46 0h8v4h-8z" fill="#8a8a8c"/><path d="M99 0h36v18H99z" fill="#e3b3b5"/><path d="M108 4h18v9h-18z" fill="#e19fa3"/><path d="M135 4h7v14h-7z" fill="#e2cccd"/><path d="M99 18h40v2H99z" fill="#dcd2d8"/>
          </svg>
          <div class="controls">${this.tool("minimize", "最小化", 12)}${this.tool("restore", "还原", 12)}${this.tool("close", "关闭", 12)}</div>
        </div>
        <div class="top">
          <mold-ribbon></mold-ribbon>
          <div class="extras">${this.tool("up", "最小化功能区", 12)}${this.tool("search", "搜索", 13)}${this.tool("help", "帮助", 14)}</div>
        </div>
        <div class="work"><model-tree></model-tree><mold-canvas></mold-canvas></div>
      </main>
      <aside class="desktop"><span class="number">02</span></aside>
      <menu-manager role="dialog" aria-label="菜单管理器"></menu-manager>`;
  }
}
